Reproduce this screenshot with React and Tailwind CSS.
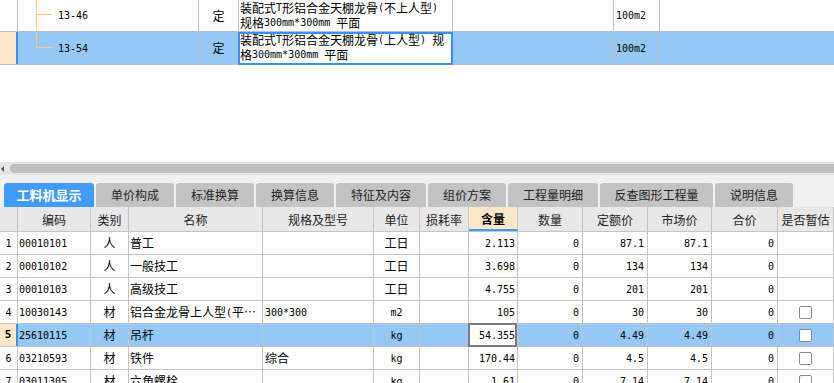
import React from "react";

const CJK = /([\u22ef\u3000-\u9fff\uff00-\uffef]+)/;

// split mixed text: CJK runs at 12px, latin/digits in a narrow mono at 10px
const T = ({ s }) => {
  if (!s) return null;
  return s
    .split(CJK)
    .filter(Boolean)
    .map((p, i) =>
      CJK.test(p) ? (
        <span key={i} className="text-[12px]">{p}</span>
      ) : (
        <span key={i} className="font-['DejaVu_Sans_Mono',monospace] text-[10px] whitespace-pre">
          {p}
        </span>
      )
    );
};

const tabs = [
  { label: "工料机显示", w: "w-[90px]", active: true },
  { label: "单价构成", w: "w-[78px]" },
  { label: "标准换算", w: "w-[78px]" },
  { label: "换算信息", w: "w-[78px]" },
  { label: "特征及内容", w: "w-[90px]" },
  { label: "组价方案", w: "w-[78px]" },
  { label: "工程量明细", w: "w-[90px]" },
  { label: "反查图形工程量", w: "w-[113px]" },
  { label: "说明信息", w: "w-[78px]" },
];

const cols = [
  { key: "n", title: "", w: "w-[18px]", align: "justify-center" },
  { key: "code", title: "编码", w: "w-[73px]", align: "justify-start pl-[1px]" },
  { key: "type", title: "类别", w: "w-[38px]", align: "justify-center" },
  { key: "name", title: "名称", w: "w-[134px]", align: "justify-start pl-[1px]" },
  { key: "spec", title: "规格及型号", w: "w-[111px]", align: "justify-start pl-[2px]" },
  { key: "unit", title: "单位", w: "w-[46px]", align: "justify-center" },
  { key: "loss", title: "损耗率", w: "w-[49px]", align: "justify-end pr-[3px]" },
  { key: "qty", title: "含量", w: "w-[49px]", align: "justify-end pr-[2px]" },
  { key: "num", title: "数量", w: "w-[65px]", align: "justify-end pr-[3px]" },
  { key: "base", title: "定额价", w: "w-[65px]", align: "justify-end pr-[3px]" },
  { key: "market", title: "市场价", w: "w-[64px]", align: "justify-end pr-[3px]" },
  { key: "total", title: "合价", w: "w-[66px]", align: "justify-end pr-[3px]" },
  { key: "check", title: "是否暂估", w: "w-[56px]", align: "justify-center" },
];

const rows = [
  { n: "1", code: "00010101", type: "人", name: "普工", spec: "", unit: "工日", loss: "", qty: "2.113", num: "0", base: "87.1", market: "87.1", total: "0", check: false },
  { n: "2", code: "00010102", type: "人", name: "一般技工", spec: "", unit: "工日", loss: "", qty: "3.698", num: "0", base: "134", market: "134", total: "0", check: false },
  { n: "3", code: "00010103", type: "人", name: "高级技工", spec: "", unit: "工日", loss: "", qty: "4.755", num: "0", base: "201", market: "201", total: "0", check: false },
  { n: "4", code: "10030143", type: "材", name: "铝合金龙骨上人型(平⋯", spec: "300*300", unit: "m2", loss: "", qty: "105", num: "0", base: "30", market: "30", total: "0", check: true },
  { n: "5", code: "25610115", type: "材", name: "吊杆", spec: "", unit: "kg", loss: "", qty: "54.355", num: "0", base: "4.49", market: "4.49", total: "0", check: true, selected: true },
  { n: "6", code: "03210593", type: "材", name: "铁件", spec: "综合", unit: "kg", loss: "", qty: "170.44", num: "0", base: "4.5", market: "4.5", total: "0", check: true },
  { n: "7", code: "03011305", type: "材", name: "六角螺栓", spec: "", unit: "kg", loss: "", qty: "1.61", num: "0", base: "7.14", market: "7.14", total: "0", check: true },
];

const Checkbox = () => (
  <div className="w-[13px] h-[13px] rounded-[2px] border border-[#8a8a8a] bg-white" />
);

const Lines = ({ lines }) =>
  lines.map((l, i) => (
    <div key={i} className="flex items-center h-[15px] whitespace-nowrap">
      <T s={l} />
    </div>
  ));

const TopRow = ({ code, lines, selected, first }) => (
  <div
    className={`flex shrink-0 border-b border-[#c0c0c0] ${first ? "h-[32px]" : "h-[33px]"} ${
      selected ? "bg-[#95c8f4]" : "bg-white"
    }`}
  >
    {selected ? (
      <div className="w-[18px] bg-[#fde7c9] border-r-2 border-[#3b8ef2]" />
    ) : (
      <div className="w-[18px] bg-white border-r border-[#c0c0c0]" />
    )}
    <div className="w-[181px] flex border-r border-[#c0c0c0]">
      <div className="w-[18px]" />
      <div className="relative w-[16px]">
        <div
          className={`absolute left-0 top-0 w-px bg-[#fcc77c] ${first ? "bottom-0" : "h-[15px]"}`}
        />
        <div
          className={`absolute left-0 w-[16px] h-px bg-[#fcc77c] ${first ? "top-[14px]" : "top-[15px]"}`}
        />
      </div>
      <div className="pl-[6px] flex items-center">
        <T s={code} />
      </div>
    </div>
    <div className="w-[40px] flex items-center justify-center border-r border-[#c0c0c0]">
      <T s="定" />
    </div>
    {selected ? (
      <div className="relative w-[214px] bg-white">
        <div className="absolute -left-px top-0 right-0 -bottom-px border-2 border-[#3b8ef2]" />
        <div className="relative pl-[1px] pt-[0px]">
          <Lines lines={lines} />
        </div>
      </div>
    ) : (
      <div className="w-[214px] border-r border-[#c0c0c0] pl-[1px]">
        <Lines lines={lines} />
      </div>
    )}
    <div className="w-[161px] border-r border-[#c0c0c0]" />
    <div className="w-[46px] flex items-center pl-[2px] border-r border-[#c0c0c0]">
      <T s="100m2" />
    </div>
    <div className="flex-1" />
  </div>
);

export default function App() {
  return (
    <div className="w-[834px] h-[383px] overflow-hidden bg-white flex flex-col font-['Noto_Sans_CJK_SC',sans-serif] text-black">
      {/* upper grid */}
      <TopRow
        first
        code="13-46"
        lines={["装配式T形铝合金天棚龙骨(不上人型)", "规格300mm*300mm 平面"]}
      />
      <TopRow
        selected
        code="13-54"
        lines={["装配式T形铝合金天棚龙骨(上人型) 规", "格300mm*300mm 平面"]}
      />
      <div className="h-[97px] shrink-0 bg-white" />

      {/* horizontal scrollbar */}
      <div className="h-[13px] shrink-0 bg-[#e6e6e6] flex items-center">
        <svg width="10" height="8" viewBox="0 0 10 8" className="shrink-0">
          <path d="M1 4 L4 1 L4 7 Z" fill="#555" />
        </svg>
        <div className="flex-1 h-[9px] rounded-l-full bg-[#c0c0c0]" />
      </div>

      {/* tabs */}
      <div className="h-[32px] shrink-0 bg-[#f0f0f0] flex items-end pl-[4px] gap-[2px]">
        {tabs.map((t) => (
          <div
            key={t.label}
            className={`${t.w} h-[24px] rounded-t-[3px] flex items-center justify-center ${
              t.active
                ? "bg-[#419bf9] text-white font-bold text-[13px]"
                : "bg-[#c3c3c3] text-[#222] text-[12px]"
            }`}
          >
            {t.label}
          </div>
        ))}
      </div>

      {/* lower grid header */}
      <div className="flex h-[25px] shrink-0 bg-[#e8e8e8] border-b border-[#c4c4c4]">
        {cols.map((c) => (
          <div
            key={c.key}
            className={`${c.w} shrink-0 flex items-center justify-center pt-[2px] border-r border-[#c4c4c4] text-[12px] ${
              c.key === "qty"
                ? "bg-[#fde7c9] font-bold border-b-2 border-b-[#3d9af5]"
                : "text-[#222]"
            }`}
          >
            {c.title}
          </div>
        ))}
      </div>

      {/* lower grid rows */}
      {rows.map((r) => (
        <div
          key={r.n}
          className={`flex h-[23px] shrink-0 border-b border-[#c4c4c4] ${
            r.selected ? "bg-[#95c8f4]" : "bg-white"
          }`}
        >
          {cols.map((c) => {
            if (c.key === "n") {
              return r.selected ? (
                <div
                  key={c.key}
                  className="w-[18px] shrink-0 flex items-center justify-center bg-[#fde7c9] border-r-2 border-[#3b8ef2]"
                >
                  <span className="font-['DejaVu_Sans_Mono',monospace] text-[11px] font-bold">{r.n}</span>
                </div>
              ) : (
                <div
                  key={c.key}
                  className="w-[18px] shrink-0 flex items-center justify-center bg-white border-r border-[#c4c4c4]"
                >
                  <T s={r.n} />
                </div>
              );
            }
            if (c.key === "qty" && r.selected) {
              return (
                <div
                  key={c.key}
                  className={`relative ${c.w} shrink-0 flex items-center ${c.align} bg-white border-r border-[#c4c4c4]`}
                >
                  <div className="absolute -left-px -top-px right-0 -bottom-px border-2 border-[#7b7b7b]" />
                  <div className="relative flex items-center">
                    <T s={r.qty} />
                  </div>
                </div>
              );
            }
            return (
              <div
                key={c.key}
                className={`${c.w} shrink-0 flex items-center ${c.align} border-r border-[#c4c4c4] whitespace-nowrap overflow-hidden`}
              >
                {c.key === "check" ? r.check && <Checkbox /> : <T s={r[c.key]} />}
              </div>
            );
          })}
        </div>
      ))}
    </div>
  );
}
